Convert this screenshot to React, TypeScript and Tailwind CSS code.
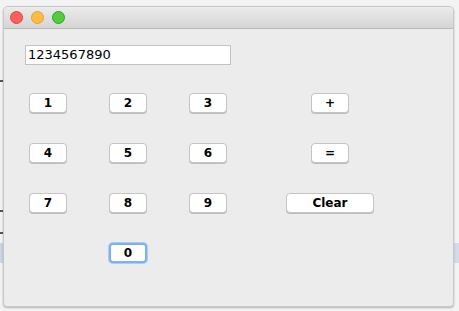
const font = { fontFamily: '"DejaVu Sans", "Liberation Sans", sans-serif' };

function Key({ label, wide, focus }: { label: string; wide?: boolean; focus?: boolean }) {
	return (
		<button
			className={`h-[20px] ${wide ? "w-[88px]" : "w-[38px]"} rounded-[4px] bg-white text-[12px] font-bold leading-none text-black ${
				focus
					? "border-2 border-[#7eb1f2] shadow-[0_0_0_1px_#a9cdf7]"
					: "border border-[#c4c4c4] shadow-[0_1px_0_#bdbdbd]"
			}`}
		>
			{label}
		</button>
	);
}

function Cell({ children }: { children?: React.ReactNode }) {
	return <div className="flex h-[20px] items-center justify-center">{children}</div>;
}

export default function App() {
	return (
		<div className="relative h-[311px] w-[459px] overflow-hidden bg-[#f3f3f3]" style={font}>
			{/* bits of the desktop behind the window */}
			<div className="absolute left-0 top-[80px] h-[2px] w-[3px] bg-[#555]" />
			<div className="absolute left-0 top-[210px] h-[2px] w-[3px] bg-[#555]" />
			<div className="absolute left-0 top-[232px] h-[2px] w-[3px] bg-[#555]" />
			<div className="absolute left-0 top-[243px] h-[20px] w-[3px] bg-[#c9d6e6]" />
			<div className="absolute right-0 top-[243px] h-[20px] w-[6px] bg-[#d3dce8]" />

			<div className="relative ml-[3px] mt-[6px] flex h-[301px] w-[451px] flex-col overflow-hidden rounded-t-[5px] rounded-b-[4px] border border-[#c8c8c8] bg-[#ececec] shadow-[0_1px_2px_rgba(0,0,0,0.25)]">
				{/* title bar */}
				<div className="flex h-[22px] items-center gap-[8px] border-b border-[#b9b9b9] bg-gradient-to-b from-[#ebebeb] to-[#d5d5d5] pl-[6px]">
					<span className="h-[13px] w-[13px] rounded-full border border-[#e0443e] bg-[#fc605c]" />
					<span className="h-[13px] w-[13px] rounded-full border border-[#dea236] bg-[#fdbc40]" />
					<span className="h-[13px] w-[13px] rounded-full border border-[#1aab29] bg-[#5bc93f]" />
				</div>

				{/* body */}
				<div className="flex flex-col pl-[4px]">
					<div className="ml-[17px] mt-[16px] flex h-[20px] w-[206px] items-center border border-[#c2c2c2] bg-white pl-[2px] text-[13px] text-black">
						1234567890
					</div>

					<div className="mt-[28px] grid grid-cols-[80px_80px_80px_164px] gap-y-[30px]">
						<Cell><Key label="1" /></Cell>
						<Cell><Key label="2" /></Cell>
						<Cell><Key label="3" /></Cell>
						<Cell><Key label="+" /></Cell>

						<Cell><Key label="4" /></Cell>
						<Cell><Key label="5" /></Cell>
						<Cell><Key label="6" /></Cell>
						<Cell><Key label="=" /></Cell>

						<Cell><Key label="7" /></Cell>
						<Cell><Key label="8" /></Cell>
						<Cell><Key label="9" /></Cell>
						<Cell><Key label="Clear" wide /></Cell>

						<Cell />
						<Cell><Key label="0" focus /></Cell>
						<Cell />
						<Cell />
					</div>
				</div>
			</div>
		</div>
	);
}
